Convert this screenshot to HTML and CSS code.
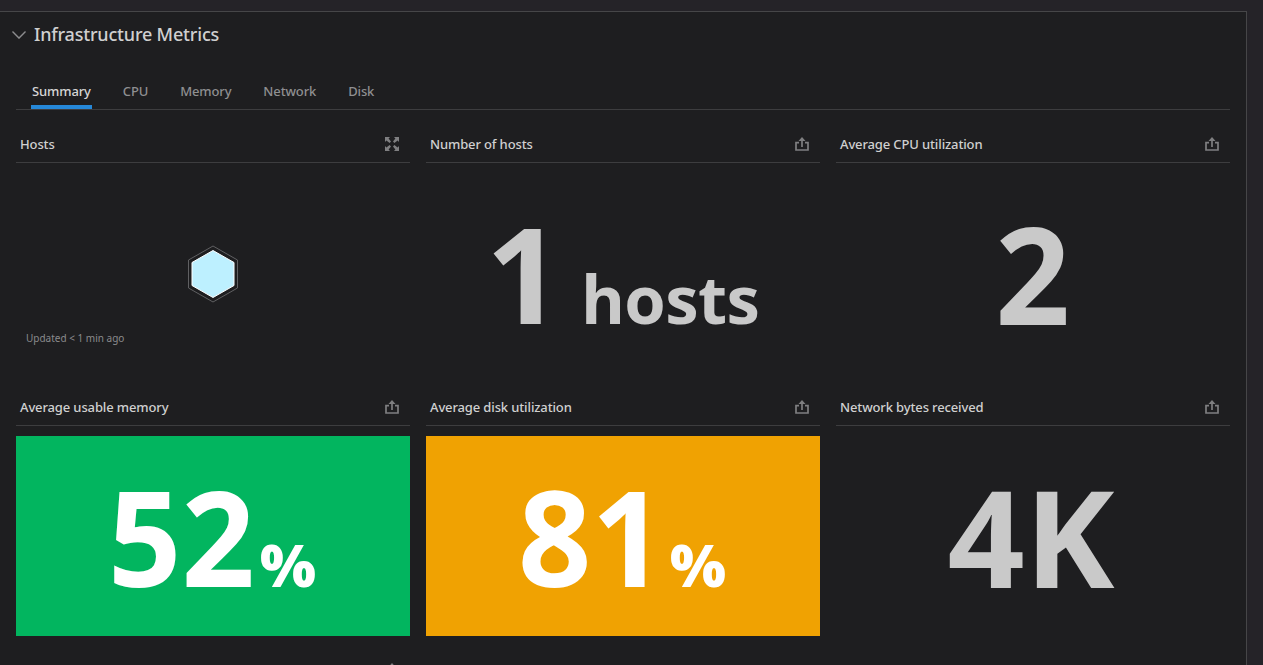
FILE: index.html
```html
<!DOCTYPE html>
<html lang="en">
<head>
<meta charset="utf-8">
<title>Infrastructure Metrics</title>
<link rel="stylesheet" href="styles.css">
</head>
<body>
<svg class="defs" aria-hidden="true">
  <symbol id="share" viewBox="0 0 14 14"><path d="M4 5.700H1v7.300h12V5.700H10M7 10V2" fill="none" stroke="currentColor" stroke-width="1.7"/><path d="M3.500 4 7 0l3.500 4z" fill="currentColor"/></symbol>
  <symbol id="expand" viewBox="0 0 14 14"><path d="M0 0h5L3.600 1.400 6 4.600 4.600 6 1.400 3.600 0 5zM14 0H9l1.400 1.400L8 4.600 9.400 6l3.200-2.400L14 5zM0 14h5l-1.400-1.400L6 9.400 4.600 8l-3.200 2.400L0 9zM14 14H9l1.400-1.400L8 9.400 9.400 8l3.200 2.400L14 9z" fill="currentColor"/></symbol>
</svg>
<main class="panel">
  <header class="panel-head">
    <svg class="chevron" viewBox="0 0 14 8"><path d="M.5.6 7 7.1 13.5.6" fill="none" stroke="currentColor" stroke-width="1.4"/></svg>
    <h1 class="title">Infrastructure Metrics</h1>
  </header>
  <nav class="tabs">
    <a class="tab active">Summary</a><a class="tab">CPU</a><a class="tab">Memory</a><a class="tab">Network</a><a class="tab">Disk</a>
  </nav>
  <div class="grid">
    <section class="card">
      <div class="card-head"><h2 class="name">Hosts</h2><svg class="icon"><use href="#expand"/></svg></div>
      <div class="body map">
        <svg class="hex" viewBox="0 0 52 58"><path d="M26 1 50.5 15v28L26 57 1.500 43V15z" fill="#1e1e20" stroke="#606062"/><path d="M26 5.500 47 17.500v23L26 52.500 5 40.500v-23z" fill="#bdf0ff" stroke="#fff"/></svg>
        <span class="updated">Updated &lt; 1 min ago</span>
      </div>
    </section>
    <section class="card">
      <div class="card-head"><h2 class="name">Number of hosts</h2><svg class="icon"><use href="#share"/></svg></div>
      <div class="body value count">1<span class="unit word">hosts</span></div>
    </section>
    <section class="card">
      <div class="card-head"><h2 class="name">Average CPU utilization</h2><svg class="icon"><use href="#share"/></svg></div>
      <div class="body value large"><span class="single">2</span></div>
    </section>
    <section class="card">
      <div class="card-head"><h2 class="name">Average usable memory</h2><svg class="icon"><use href="#share"/></svg></div>
      <div class="body value green"><span class="digits">52</span><span class="unit">%</span></div>
    </section>
    <section class="card">
      <div class="card-head"><h2 class="name">Average disk utilization</h2><svg class="icon"><use href="#share"/></svg></div>
      <div class="body value orange"><span class="digits">81</span><span class="unit">%</span></div>
    </section>
    <section class="card">
      <div class="card-head"><h2 class="name">Network bytes received</h2><svg class="icon"><use href="#share"/></svg></div>
      <div class="body value large bytes">4K</div>
    </section>
    <section class="card next">
      <div class="card-head"><svg class="icon"><use href="#share"/></svg></div>
    </section>
  </div>
</main>
</body>
</html>
```
FILE: styles.css
```css
* { box-sizing: border-box; }
body {
  margin: 0;
  height: 665px;
  overflow: hidden;
  padding-top: 11px;
  background: #252328;
  font-family: "Noto Sans", "Open Sans", sans-serif;
  color: #d0d0d0;
}
.defs { display: none; }
.panel {
  width: 1247px;
  height: 654px;
  overflow: hidden;
  border: 1px solid #464648;
  border-width: 1px 1px 0 0;
  background: #1e1e20;
}
.panel-head {
  display: flex;
  align-items: center;
  gap: 8px;
  height: 45px;
  padding-left: 12px;
}
.chevron { width: 14px; height: 8px; color: #8c8c8e; }
.title { margin: 0; font-size: 18px; font-weight: 500; line-height: 25px; letter-spacing: -0.19px; }
.tabs {
  display: flex;
  gap: 30px;
  width: 1214px;
  height: 36px;
  margin: 17px 0 0 16px;
  padding-left: 15px;
  border-bottom: 1px solid #3d3d3f;
}
.tab {
  height: 35px;
  padding: 0 1px;
  font-size: 13px;
  font-weight: 500;
  line-height: 35px;
  letter-spacing: -0.135px;
  color: #8f8f91;
}
.active { color: #d6d6d6; border-bottom: 4px solid #2688d8; }
.grid {
  display: grid;
  grid-template-columns: repeat(3, 394px);
  gap: 0 16px;
  padding: 16px 0 0 16px;
}
.card { height: 263px; }
.card-head {
  display: flex;
  align-items: center;
  justify-content: space-between;
  height: 37px;
  padding: 0 11px 0 4px;
  border-bottom: 1px solid #3d3d3f;
}
.next { height: 26px; overflow: hidden; }
.next .card-head { justify-content: flex-end; }
.name { margin: 0; font-size: 13px; font-weight: 500; line-height: 18px; letter-spacing: -0.13px; }
.icon { width: 14px; height: 14px; color: #7f7f81; }
.body { height: 200px; margin-top: 10px; }
.map { display: flex; flex-direction: column; justify-content: flex-end; padding: 0 10px 28px; }
.hex { width: 52px; height: 58px; margin-bottom: 28px; align-self: center; }
.updated { font-size: 10px; line-height: 14px; color: #8a8a8c; }
.value {
  text-align: center;
  font-family: "Open Sans", "Noto Sans", sans-serif;
  font-size: 133px;
  font-weight: 700;
  line-height: 200px;
  color: #c9c9c9;
  white-space: nowrap;
}
.large { font-size: 135px; }
.single { display: inline-block; transform: scaleX(0.97); }
.digits { display: inline-block; margin-right: -5px; transform: scaleX(0.965); transform-origin: left; }
.unit { font-size: 59px; font-weight: 800; line-height: 1; margin-left: 5px; }
.word { font-size: 67px; font-weight: 700; letter-spacing: -0.6px; margin-left: 19px; }
.count { padding-right: 1px; }
.bytes { padding-right: 4px; }
.green { padding-right: 2px; background: #02b55f; color: #fff; }
.orange { padding-right: 2px; background: #f0a202; color: #fff; }
```
